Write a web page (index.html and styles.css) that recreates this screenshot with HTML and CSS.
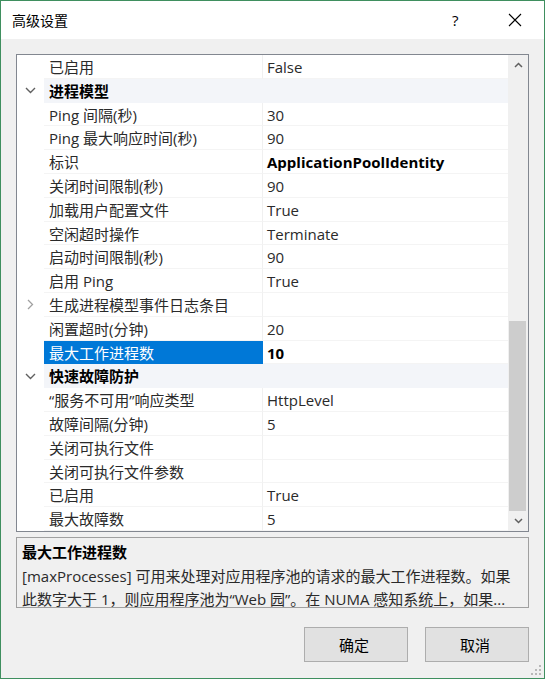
FILE: index.html
```html
<!DOCTYPE html>
<html>
<head>
<meta charset="utf-8">
<link rel="stylesheet" href="styles.css">
</head>
<body>
<div class="window">
  <div class="titlebar">
    <span class="title">高级设置</span>
    <span class="help">?</span>
    <span class="close">
      <svg width="14" height="14" viewBox="0 0 14 14"><path d="M1 1L13 13M13 1L1 13" stroke="#000" stroke-width="1.1" fill="none"/></svg>
    </span>
  </div>
  <div class="content">
    <div class="grid">
      <div class="rows">
        <div class="row"><div class="margin"></div><div class="label">已启用</div><div class="value">False</div></div>
        <div class="row cat"><div class="margin"><svg class="chev" width="11" height="7" viewBox="0 0 11 7"><path d="M1 1L5.5 5.5L10 1" stroke="#606060" stroke-width="1.4" fill="none"/></svg></div><div class="label">进程模型</div><div class="value"></div></div>
        <div class="row"><div class="margin"></div><div class="label">Ping 间隔(秒)</div><div class="value">30</div></div>
        <div class="row"><div class="margin"></div><div class="label">Ping 最大响应时间(秒)</div><div class="value">90</div></div>
        <div class="row"><div class="margin"></div><div class="label">标识</div><div class="value bold">ApplicationPoolIdentity</div></div>
        <div class="row"><div class="margin"></div><div class="label">关闭时间限制(秒)</div><div class="value">90</div></div>
        <div class="row"><div class="margin"></div><div class="label">加载用户配置文件</div><div class="value">True</div></div>
        <div class="row"><div class="margin"></div><div class="label">空闲超时操作</div><div class="value">Terminate</div></div>
        <div class="row"><div class="margin"></div><div class="label">启动时间限制(秒)</div><div class="value">90</div></div>
        <div class="row"><div class="margin"></div><div class="label">启用 Ping</div><div class="value">True</div></div>
        <div class="row"><div class="margin"><svg class="chev" width="7" height="11" viewBox="0 0 7 11"><path d="M1 1L5.5 5.5L1 10" stroke="#a0a0a0" stroke-width="1.3" fill="none"/></svg></div><div class="label">生成进程模型事件日志条目</div><div class="value"></div></div>
        <div class="row"><div class="margin"></div><div class="label">闲置超时(分钟)</div><div class="value">20</div></div>
        <div class="row sel"><div class="margin"></div><div class="label">最大工作进程数</div><div class="value bold">10</div></div>
        <div class="row cat"><div class="margin"><svg class="chev" width="11" height="7" viewBox="0 0 11 7"><path d="M1 1L5.5 5.5L10 1" stroke="#606060" stroke-width="1.4" fill="none"/></svg></div><div class="label">快速故障防护</div><div class="value"></div></div>
        <div class="row"><div class="margin"></div><div class="label">“服务不可用”响应类型</div><div class="value">HttpLevel</div></div>
        <div class="row"><div class="margin"></div><div class="label">故障间隔(分钟)</div><div class="value">5</div></div>
        <div class="row"><div class="margin"></div><div class="label">关闭可执行文件</div><div class="value"></div></div>
        <div class="row"><div class="margin"></div><div class="label">关闭可执行文件参数</div><div class="value"></div></div>
        <div class="row"><div class="margin"></div><div class="label">已启用</div><div class="value">True</div></div>
        <div class="row"><div class="margin"></div><div class="label">最大故障数</div><div class="value">5</div></div>
      </div>
      <div class="scrollbar">
        <div class="arrow"><svg width="9" height="6" viewBox="0 0 9 6"><path d="M1 5L4.5 1.5L8 5" stroke="#606060" stroke-width="1.5" fill="none"/></svg></div>
        <div class="track"><div class="thumb"></div></div>
        <div class="arrow"><svg width="9" height="6" viewBox="0 0 9 6"><path d="M1 1L4.5 4.5L8 1" stroke="#606060" stroke-width="1.5" fill="none"/></svg></div>
      </div>
    </div>
    <div class="desc">
      <div class="desc-title">最大工作进程数</div>
      <div class="desc-text">[maxProcesses] 可用来处理对应用程序池的请求的最大工作进程数。如果</div>
      <div class="desc-text">此数字大于 1，则应用程序池为“Web 园”。在 NUMA 感知系统上，如果...</div>
    </div>
    <div class="buttons">
      <div class="btn">确定</div>
      <div class="btn">取消</div>
    </div>
  </div>
  <div class="grip">
    <svg width="10" height="10" viewBox="0 0 10 10"><g fill="#b8b8b8"><rect x="8" y="0" width="2" height="2"/><rect x="4" y="4" width="2" height="2"/><rect x="8" y="4" width="2" height="2"/><rect x="0" y="8" width="2" height="2"/><rect x="4" y="8" width="2" height="2"/><rect x="8" y="8" width="2" height="2"/></g></svg>
  </div>
</div>
</body>
</html>
```
FILE: styles.css
```css
html, body {
  margin: 0;
  padding: 0;
}
body {
  font-family: "Open Sans", "Noto Sans CJK SC", sans-serif;
  font-size: 15px;
  color: #000;
}
.window {
  position: relative;
  width: 545px;
  height: 679px;
  box-sizing: border-box;
  border: 1px solid #3f8f5f;
  background: #f0f0f0;
  display: flex;
  flex-direction: column;
}
.titlebar {
  height: 38px;
  flex: none;
  background: #fff;
  display: flex;
  align-items: center;
  padding-left: 11px;
}
.title {
  font-size: 14px;
  flex: 1;
}
.help {
  font-size: 15px;
  width: 20px;
  margin-right: 36px;
}
.close {
  display: flex;
  width: 14px;
  margin-right: 22px;
}
.content {
  padding: 15px 15px 0 15px;
  display: flex;
  flex-direction: column;
}
.grid {
  height: 478px;
  box-sizing: border-box;
  border: 1px solid #828790;
  background: #fff;
  display: flex;
}
.rows {
  flex: 1;
  overflow: hidden;
}
.row {
  display: flex;
  height: 23.8px;
  align-items: stretch;
  line-height: 22.8px;
  color: #2a2a2a;
}
.margin {
  width: 27px;
  flex: none;
  display: flex;
  align-items: center;
  justify-content: center;
}
.label {
  width: 219px;
  flex: none;
  padding-left: 5px;
  padding-top: 1px;
  white-space: nowrap;
  overflow: hidden;
  border-right: 1px solid #f0f0f0;
  border-bottom: 1px solid #f4f4f4;
  box-sizing: border-box;
}
.value {
  flex: 1;
  padding-left: 4px;
  padding-top: 1px;
  white-space: nowrap;
  border-bottom: 1px solid #f4f4f4;
  box-sizing: border-box;
}
.bold {
  font-weight: 700;
  color: #000;
}
.cat .label, .cat .value {
  background: #f3f5f9;
  font-weight: 700;
  color: #000;
  border-color: #f3f5f9;
}
.cat .margin {
  background: #fff;
}
.sel .label {
  background: #0078d7;
  color: #fff;
  border-color: #0078d7;
}
.scrollbar {
  width: 20px;
  flex: none;
  background: #f0f0f0;
  display: flex;
  flex-direction: column;
}
.arrow {
  height: 20px;
  flex: none;
  display: flex;
  align-items: center;
  justify-content: center;
}
.track {
  flex: 1;
  display: flex;
  flex-direction: column;
  justify-content: flex-end;
  padding: 0 2px 0 1px;
}
.thumb {
  height: 190px;
  background: #cdcdcd;
}
.desc {
  margin-top: 5px;
  height: 71px;
  box-sizing: border-box;
  border: 1px solid #a0a0a0;
  padding: 3px 5px 0 5px;
  line-height: 23.5px;
  color: #2a2a2a;
  overflow: hidden;
}
.desc-title {
  font-weight: 700;
  color: #000;
}
.desc-text {
  white-space: nowrap;
}
.buttons {
  margin-top: 19px;
  display: flex;
  justify-content: flex-end;
  gap: 17px;
}
.btn {
  width: 104px;
  height: 35px;
  box-sizing: border-box;
  border: 1px solid #adadad;
  background: #e1e1e1;
  display: flex;
  align-items: center;
  justify-content: center;
  font-size: 15px;
  padding-right: 4px;
}
.grip {
  position: absolute;
  right: 3px;
  bottom: 3px;
  display: flex;
}
```
